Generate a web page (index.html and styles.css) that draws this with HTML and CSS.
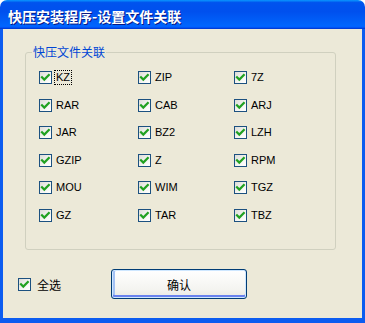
FILE: index.html
```html
<!DOCTYPE html>
<html>
<head>
<meta charset="utf-8">
<link rel="stylesheet" href="styles.css">
</head>
<body>
<div class="window">
  <div class="titlebar"><span class="title">快压安装程序-设置文件关联</span></div>
  <div class="client">
    <fieldset class="group">
      <legend class="legend">快压文件关联</legend>
      <div class="grid">
        <label class="item"><span class="chk"><svg viewBox="0 0 11 11" width="11" height="11"><path d="M2 5.2 L4.3 7.6 L8.8 3" /></svg></span><span class="txt focus">KZ</span></label>
        <label class="item"><span class="chk"><svg viewBox="0 0 11 11" width="11" height="11"><path d="M2 5.2 L4.3 7.6 L8.8 3" /></svg></span><span class="txt">ZIP</span></label>
        <label class="item"><span class="chk"><svg viewBox="0 0 11 11" width="11" height="11"><path d="M2 5.2 L4.3 7.6 L8.8 3" /></svg></span><span class="txt">7Z</span></label>
        <label class="item"><span class="chk"><svg viewBox="0 0 11 11" width="11" height="11"><path d="M2 5.2 L4.3 7.6 L8.8 3" /></svg></span><span class="txt">RAR</span></label>
        <label class="item"><span class="chk"><svg viewBox="0 0 11 11" width="11" height="11"><path d="M2 5.2 L4.3 7.6 L8.8 3" /></svg></span><span class="txt">CAB</span></label>
        <label class="item"><span class="chk"><svg viewBox="0 0 11 11" width="11" height="11"><path d="M2 5.2 L4.3 7.6 L8.8 3" /></svg></span><span class="txt">ARJ</span></label>
        <label class="item"><span class="chk"><svg viewBox="0 0 11 11" width="11" height="11"><path d="M2 5.2 L4.3 7.6 L8.8 3" /></svg></span><span class="txt">JAR</span></label>
        <label class="item"><span class="chk"><svg viewBox="0 0 11 11" width="11" height="11"><path d="M2 5.2 L4.3 7.6 L8.8 3" /></svg></span><span class="txt">BZ2</span></label>
        <label class="item"><span class="chk"><svg viewBox="0 0 11 11" width="11" height="11"><path d="M2 5.2 L4.3 7.6 L8.8 3" /></svg></span><span class="txt">LZH</span></label>
        <label class="item"><span class="chk"><svg viewBox="0 0 11 11" width="11" height="11"><path d="M2 5.2 L4.3 7.6 L8.8 3" /></svg></span><span class="txt">GZIP</span></label>
        <label class="item"><span class="chk"><svg viewBox="0 0 11 11" width="11" height="11"><path d="M2 5.2 L4.3 7.6 L8.8 3" /></svg></span><span class="txt">Z</span></label>
        <label class="item"><span class="chk"><svg viewBox="0 0 11 11" width="11" height="11"><path d="M2 5.2 L4.3 7.6 L8.8 3" /></svg></span><span class="txt">RPM</span></label>
        <label class="item"><span class="chk"><svg viewBox="0 0 11 11" width="11" height="11"><path d="M2 5.2 L4.3 7.6 L8.8 3" /></svg></span><span class="txt">MOU</span></label>
        <label class="item"><span class="chk"><svg viewBox="0 0 11 11" width="11" height="11"><path d="M2 5.2 L4.3 7.6 L8.8 3" /></svg></span><span class="txt">WIM</span></label>
        <label class="item"><span class="chk"><svg viewBox="0 0 11 11" width="11" height="11"><path d="M2 5.2 L4.3 7.6 L8.8 3" /></svg></span><span class="txt">TGZ</span></label>
        <label class="item"><span class="chk"><svg viewBox="0 0 11 11" width="11" height="11"><path d="M2 5.2 L4.3 7.6 L8.8 3" /></svg></span><span class="txt">GZ</span></label>
        <label class="item"><span class="chk"><svg viewBox="0 0 11 11" width="11" height="11"><path d="M2 5.2 L4.3 7.6 L8.8 3" /></svg></span><span class="txt">TAR</span></label>
        <label class="item"><span class="chk"><svg viewBox="0 0 11 11" width="11" height="11"><path d="M2 5.2 L4.3 7.6 L8.8 3" /></svg></span><span class="txt">TBZ</span></label>
      </div>
    </fieldset>
    <div class="bottom">
      <label class="item all"><span class="chk"><svg viewBox="0 0 11 11" width="11" height="11"><path d="M2 5.2 L4.3 7.6 L8.8 3" /></svg></span><span class="txt cjk">全选</span></label>
      <button class="btn">确认</button>
    </div>
  </div>
</div>
</body>
</html>
```

FILE: styles.css
```css
html, body {
  margin: 0;
  padding: 0;
  background: #ffffff;
}
.window {
  width: 365px;
  height: 323px;
  display: flex;
  flex-direction: column;
  box-sizing: border-box;
  font-family: "Liberation Sans", "Noto Sans CJK SC", sans-serif;
  font-size: 11px;
  color: #000;
}
.titlebar {
  height: 29px;
  flex: none;
  box-sizing: border-box;
  border-radius: 7px 7px 0 0;
  background: linear-gradient(to bottom, #0997ff 0%, #0053ee 9%, #0050ee 40%, #0062fa 80%, #0066ff 90%, #005bff 94%, #003dd7 97%, #003dd7 100%);
  display: flex;
  align-items: center;
  padding: 2px 0 0 8px;
}
.title {
  font-family: "Noto Sans CJK SC", sans-serif;
  font-weight: bold;
  font-size: 14px;
  line-height: 16px;
  color: #ffffff;
  text-shadow: 1px 1px 0 #0a1883;
}
.client {
  flex: 1;
  background: #ece9d8;
  border-style: solid;
  border-color: #0c5cf0;
  border-width: 0 3px 5px 3px;
  display: flex;
  flex-direction: column;
}
.group {
  margin: 16px 0 0 22px;
  width: 311px;
  height: 205px;
  box-sizing: border-box;
  border: 1px solid #d0d0bf;
  border-radius: 3px;
  padding: 11px 0 0 13px;
  min-width: 0;
}
.legend {
  font-family: "Noto Sans CJK SC", sans-serif;
  font-size: 12px;
  line-height: 14px;
  color: #0046d5;
  padding: 0 1px;
  margin-left: -7px;
}
.grid {
  display: grid;
  grid-template-columns: 99px 96px 60px;
  grid-auto-rows: 15px;
  row-gap: 12.6px;
}
.item {
  display: flex;
  align-items: center;
  height: 15px;
}
.chk {
  width: 13px;
  height: 13px;
  box-sizing: border-box;
  border: 1px solid #1c5180;
  background: linear-gradient(135deg, #dcdcd7 0%, #f6f6f3 60%, #ffffff 100%);
  display: flex;
  align-items: center;
  justify-content: center;
  flex: none;
}
.chk svg path {
  fill: none;
  stroke: #21a121;
  stroke-width: 2.2;
  stroke-linecap: square;
}
.txt {
  margin-left: 2px;
  padding: 0 1px;
  line-height: 13px;
  border: 1px solid transparent;
}
.focus {
  border: 1px dotted #000;
}
.bottom {
  display: flex;
  align-items: center;
  margin-top: 19px;
  padding-left: 15px;
}
.all {
  width: 93px;
}
.cjk {
  font-family: "Noto Sans CJK SC", sans-serif;
  font-size: 12px;
  margin-left: 4px;
}
.btn {
  width: 136px;
  height: 30px;
  margin: 0;
  padding: 0;
  border: 1px solid #003c74;
  border-radius: 3px;
  background: linear-gradient(to bottom, #ffffff 0%, #f4f4f0 70%, #e8e8e0 100%);
  box-shadow: inset 0 0 0 1px #cee7ff, inset 0 -2px 0 1px #6982ee, inset 2px 0 0 1px #a4c2f4;
  font-family: "Noto Sans CJK SC", sans-serif;
  font-size: 12px;
  color: #000;
}
```
